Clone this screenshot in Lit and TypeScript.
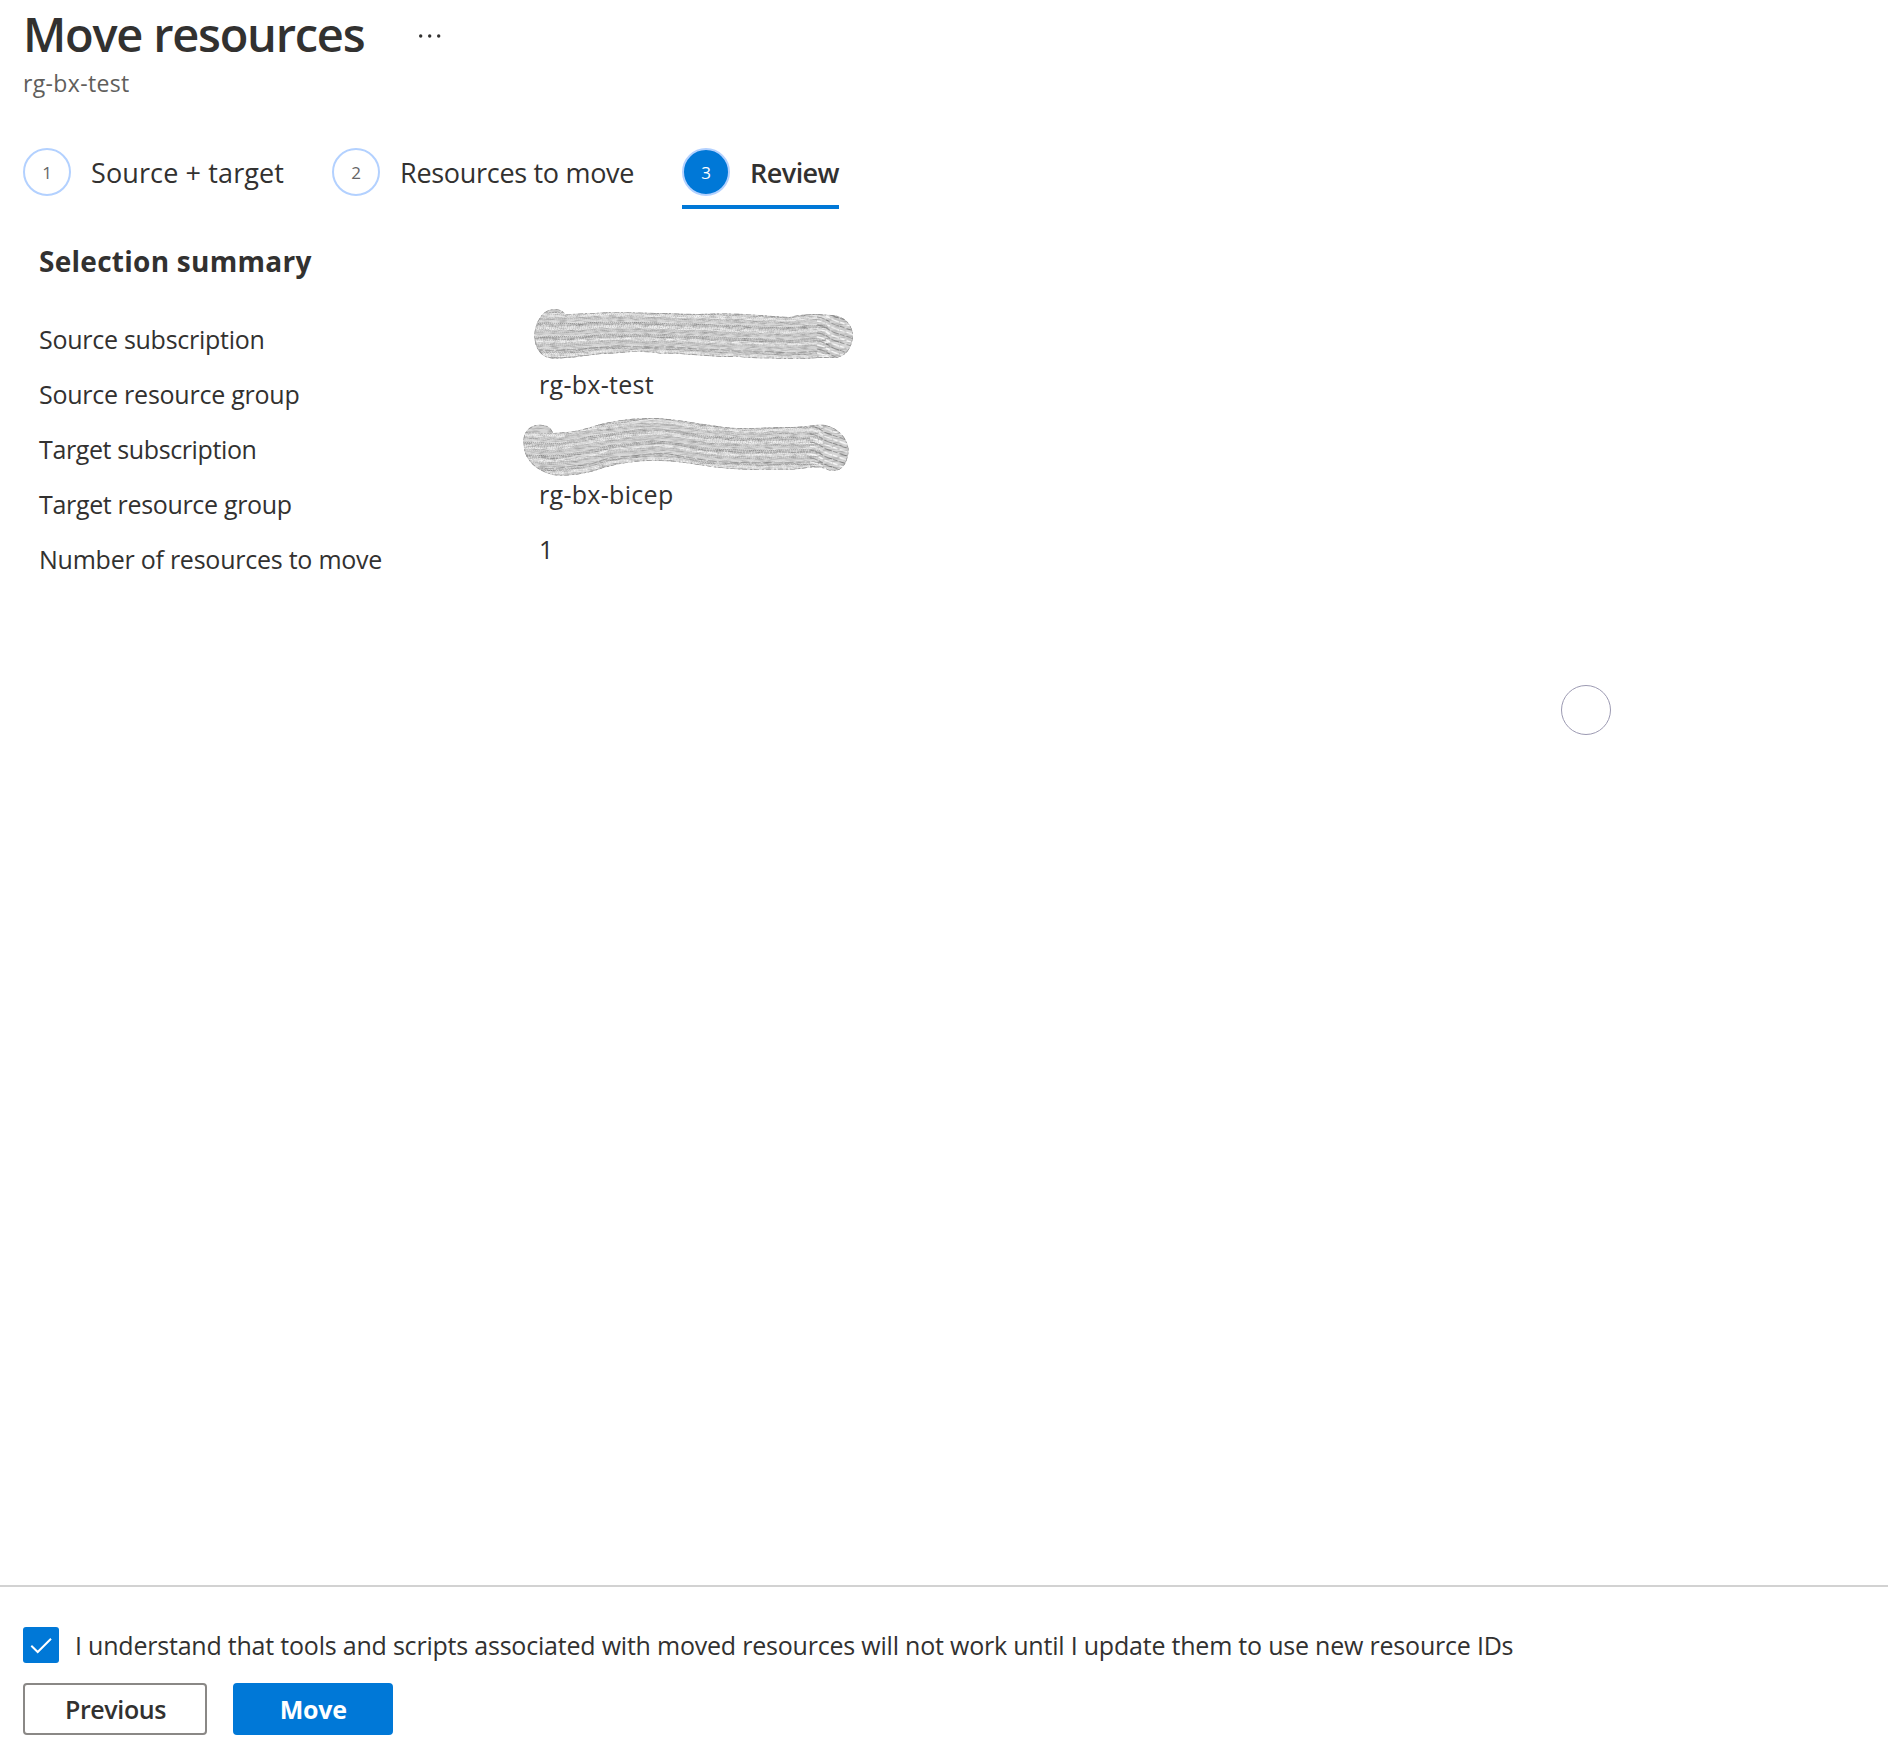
import { LitElement, html, css, svg } from 'lit';
import { customElement } from 'lit/decorators.js';
import { styleMap } from 'lit/directives/style-map.js';

type Pt = [number, number];

interface Scribble {
  width: number;
  height: number;
  outline: string;
  top: Pt[];
  bottom: Pt[];
  capX: number;
}

const SCRIBBLES: Record<string, Scribble> = {
  source: {
    width: 320,
    height: 51,
    outline:
      'M0.5 25 C1 14 8 3 15 1 C21 -0.5 28 0 31 5 C50 5 65 3 86 3.5 C112 3 140 5 165 5 C205 3 230 7 256 8 C268 4 290 5 302 6.500 C313 9 319 18 319 27 C318 40 311 49 299 49 C285 48 275 50 260 50 C240 49 225 50 206 48 C170 48 150 44 126 44.500 C110 42 90 43 80 44.500 C60 44 45 49 31 49 C22 50 15 50 10 47 C3 42 0 34 0.5 25Z',
    top: [[0, 3], [86, 3], [165, 5], [256, 8], [280, 5], [320, 7]],
    bottom: [[0, 49], [30, 49], [80, 44.5], [126, 45], [206, 49], [260, 51], [320, 48]],
    capX: 288,
  },
  target: {
    width: 326,
    height: 58,
    outline:
      'M0.5 22 C1 13 7 8 14 7 C23 6 28 9 30 15 C48 15 62 11 78 6 C96 2 110 0 130 0 C155 1 172 5 194 8 C215 12 240 9 270 9 C285 9 292 6 302 7 C311 9 320 15 323 23 C327 30 326 38 322 46 C318 53 310 55 303 51 C292 47 283 51 270 51.500 C240 51 222 53 199 50 C178 48 158 43 138 43 C118 42 98 45 80 50 C64 56 44 59 30 57 C13 53 3 42 1 31Z',
    top: [[0, 14], [30, 15], [78, 6], [130, 0], [194, 8], [220, 10], [270, 9], [326, 10]],
    bottom: [[0, 56], [30, 58], [60, 55], [95, 46], [138, 43], [199, 51], [240, 52], [326, 51]],
    capX: 292,
  },
};

const lerp = (pts: Pt[], x: number): number => {
  for (let i = 1; i < pts.length; i++) {
    if (x <= pts[i][0]) {
      const [x0, y0] = pts[i - 1];
      const [x1, y1] = pts[i];
      const t = (x - x0) / (x1 - x0);
      const s = t * t * (3 - 2 * t);
      return y0 + (y1 - y0) * s;
    }
  }
  return pts[pts.length - 1][1];
};

const GRAYS = ['#a0a0a0', '#dedede', '#b4b4b4', '#f1f1f1', '#acacac', '#d4d4d4', '#bcbcbc', '#e8e8e8', '#9a9a9a', '#c4c4c4', '#ececec'];
const DASHES = ['2 1', '5 1 2 1', '1 1', '9 2', '1 2', '3 1 1 1', '1 1'];

const drawScribble = (name: string) => {
  const s = SCRIBBLES[name];
  const rows = 38;
  const lines = Array.from({ length: rows }, (_, k) => {
    const f = (k + 0.5) / rows;
    let d = '';
    for (let x = 0; x <= s.capX + 8; x += 6) {
      const a = lerp(s.top, x);
      const b = lerp(s.bottom, x);
      const y = a + (b - a) * f + Math.sin(x * 0.13 + k) * 0.3;
      d += `${x ? 'L' : 'M'}${x} ${y.toFixed(1)}`;
    }
    return svg`<path d=${d} fill="none" stroke=${GRAYS[(k * 7) % GRAYS.length]} stroke-width="1" stroke-dasharray=${DASHES[k % DASHES.length]} />`;
  });
  const curls = Array.from({ length: 17 }, (_, k) => {
    const y = -8 + k * 4;
    return svg`<path d=${`M${s.capX - 5} ${y}q7 1 11 4t11 5t20 7`} fill="none" stroke=${k % 2 ? '#f4f4f4' : '#8c8c8c'} stroke-width=${k % 2 ? 1.6 : 1.1} stroke-dasharray="8 1 5 2" />`;
  });
  return html`<svg class="scribble ${name}" width=${s.width} height=${s.height} viewBox="0 0 ${s.width} ${s.height}" aria-hidden="true">
    <defs>
      <clipPath id="clip-${name}"><path d=${s.outline} /></clipPath>
      <filter id="grain-${name}" x="0" y="0" width="100%" height="100%" color-interpolation-filters="sRGB">
        <feTurbulence type="fractalNoise" baseFrequency="0.12 0.6" numOctaves="2" seed="4" />
        <feColorMatrix type="matrix" values="2.4 0 0 0 -0.42  2.4 0 0 0 -0.42  2.4 0 0 0 -0.42  0 0 0 0 0.17" />
      </filter>
    </defs>
    <g clip-path="url(#clip-${name})">
      <rect width=${s.width} height=${s.height} fill="#cdcdcd" />
      ${lines}${curls}
      <rect width=${s.width} height=${s.height} filter="url(#grain-${name})" />
      <path d=${s.outline} fill="none" stroke="#8c8c8c" stroke-width="1.2" stroke-dasharray="5 2 2 3" />
    </g>
  </svg>`;
};

const STEPS = [
  { label: 'Source + target', active: false, tracking: 0.12 },
  { label: 'Resources to move', active: false, tracking: -0.31 },
  { label: 'Review', active: true, tracking: -0.56 },
];

const ROWS = [
  { label: 'Source subscription', tracking: -0.27, scribble: 'source' },
  { label: 'Source resource group', tracking: -0.24, value: 'rg-bx-test' },
  { label: 'Target subscription', tracking: -0.38, scribble: 'target' },
  { label: 'Target resource group', tracking: -0.33, value: 'rg-bx-bicep' },
  { label: 'Number of resources to move', tracking: -0.24, value: '1' },
];

@customElement('app-root')
export class AppRoot extends LitElement {
  static styles = css`
    :host {
      display: block;
      font-family: 'Open Sans', 'Noto Sans', sans-serif;
      color: #323130;
      background: #fff;
    }
    * { box-sizing: border-box; }
    .page {
      position: relative;
      display: flex;
      flex-direction: column;
      height: 1748px;
      overflow: hidden;
      white-space: nowrap;
    }
    header { padding: 4px 0 0 23px; }
    .title-row { display: flex; align-items: center; height: 60px; }
    h1 {
      margin: 0;
      width: 396px;
      font-size: 47px;
      font-weight: 600;
      line-height: 60px;
      letter-spacing: -1.25px;
    }
    .more { display: block; margin-top: 4px; }
    .subtitle {
      margin-top: 3px;
      font-size: 23px;
      line-height: 32px;
      letter-spacing: 0.35px;
      color: #605e5c;
    }
    .steps { display: flex; gap: 48px; margin: 49px 0 0 23px; height: 61px; }
    .step {
      display: flex;
      align-items: flex-start;
      gap: 20px;
      font-size: 27px;
      line-height: 49px;
    }
    .step.active { font-weight: 600; border-bottom: 4px solid #0078d7; }
    .num {
      width: 48px;
      height: 48px;
      border: 2px solid #b3d1ff;
      border-radius: 50%;
      font-size: 17px;
      font-weight: 400;
      line-height: 45px;
      text-align: center;
      color: #666;
    }
    .active .num { background: #0078d7; color: #fff; }
    main { flex: 1; padding: 32px 0 0 39px; }
    h2 {
      margin: 0;
      font-size: 28px;
      font-weight: 700;
      line-height: 40px;
      letter-spacing: 0.27px;
    }
    .summary { margin-top: 43px; font-size: 25px; line-height: 30px; }
    .row { display: grid; grid-template-columns: 500px 1fr; height: 55px; }
    .value { position: relative; margin-top: -10px; letter-spacing: 0.3px; }
    .scribble { position: absolute; }
    .scribble.source { left: -5px; top: -5px; }
    .scribble.target { left: -16px; top: -6px; }
    .ring {
      position: absolute;
      left: 1561px;
      top: 685px;
      width: 50px;
      height: 50px;
      border: 1px solid #9c9ab2;
      border-radius: 50%;
    }
    footer { height: 163px; padding: 40px 23px 0; border-top: 2px solid #d2d2d2; }
    .consent { display: flex; align-items: center; gap: 16px; height: 36px; font-size: 25px; letter-spacing: -0.21px; }
    .check { display: block; width: 36px; height: 36px; background: #0078d7; border-radius: 3px; }
    .buttons { display: flex; gap: 25.500px; margin-top: 20px; }
    button {
      height: 52px;
      padding: 0 0 0 1px;
      font: 600 25px/48px 'Open Sans', sans-serif;
      letter-spacing: -0.4px;
      border-radius: 4px;
    }
    .previous { width: 184px; background: #fff; border: 2px solid #8a8886; color: #323130; }
    .move { width: 160.500px; background: #0078d7; border: 2px solid #0078d7; color: #fff; font-weight: 700; letter-spacing: -0.2px; }
  `;

  render() {
    return html`<div class="page">
      <header>
        <div class="title-row">
          <h1>Move resources</h1>
          <svg class="more" width="24" height="8" viewBox="0 0 24 8" fill="#323130">
            <circle cx="1.700" cy="4" r="1.700" /><circle cx="10.700" cy="4" r="1.700" /><circle cx="19.700" cy="4" r="1.700" />
          </svg>
        </div>
        <div class="subtitle">rg-bx-test</div>
      </header>
      <nav class="steps">
        ${STEPS.map(
          (s, i) => html`<div class="step ${s.active ? 'active' : ''}">
            <span class="num">${i + 1}</span>
            <span style=${styleMap({ letterSpacing: `${s.tracking}px` })}>${s.label}</span>
          </div>`,
        )}
      </nav>
      <main>
        <h2>Selection summary</h2>
        <div class="summary">
          ${ROWS.map(
            (r) => html`<div class="row">
              <span style=${styleMap({ letterSpacing: `${r.tracking}px` })}>${r.label}</span>
              <span class="value">${r.scribble ? drawScribble(r.scribble) : r.value}</span>
            </div>`,
          )}
        </div>
      </main>
      <div class="ring"></div>
      <footer>
        <label class="consent">
          <svg class="check" viewBox="0 0 36 36"><path d="M8.300 18.800 L14.700 25 L28 11.800" fill="none" stroke="#fff" stroke-width="2" /></svg>
          <span>I understand that tools and scripts associated with moved resources will not work until I update them to use new resource IDs</span>
        </label>
        <div class="buttons">
          <button class="previous">Previous</button>
          <button class="move">Move</button>
        </div>
      </footer>
    </div>`;
  }
}
